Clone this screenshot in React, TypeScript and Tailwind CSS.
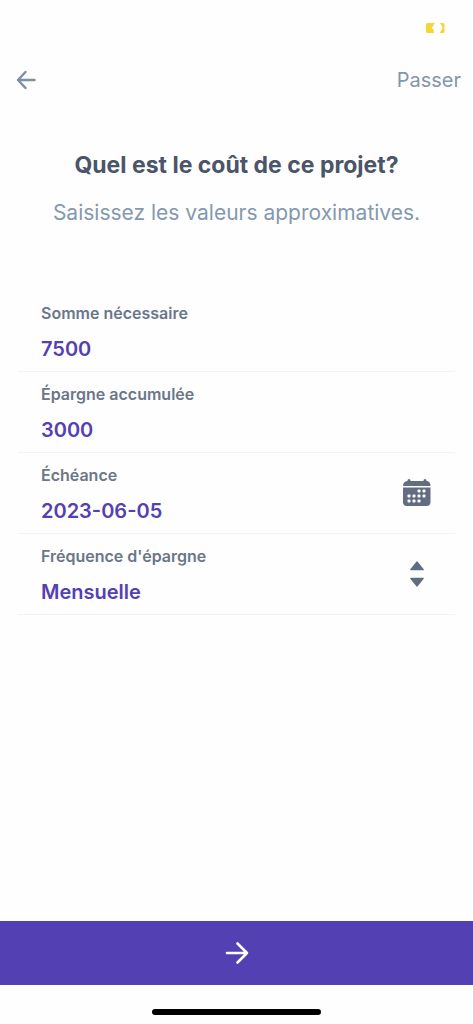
import { useState } from 'react';
import type { ReactNode } from 'react';

const valueClass =
  'block h-8 w-full appearance-none bg-transparent p-0 text-xl font-semibold text-[#5341b3] outline-none';

function Field({ id, label, icon, children }: { id: string; label: string; icon?: ReactNode; children: ReactNode }) {
  return (
    <div className="flex h-[81px] items-center border-b border-[#f3f3f5] pr-6 pl-[23px]">
      <div className="min-w-0 flex-1 pt-1">
        <label htmlFor={id} className="mb-2 block text-base font-semibold text-[#6b7689]">
          {label}
        </label>
        {children}
      </div>
      {icon}
    </div>
  );
}

function BatteryIcon() {
  return (
    <svg width="19" height="10" viewBox="0 0 19 10" fill="#f5d633" aria-hidden="true">
      <path d="M1.5 0H9L5.500 5l2 1.500L8 10H1.500Q0 10 0 8.500v-7Q0 0 1.500 0Z" />
      <path d="M14 0h3q1.500 0 1.500 1.500v7q0 1.500-1.500 1.500h-3.500L16.500 5.500Q16.500 3 14 0Z" />
    </svg>
  );
}

function CalendarIcon() {
  const dots = [
    [16, 12], [21, 12],
    [6, 17], [11, 17], [16, 17], [21, 17],
    [6, 22], [11, 22], [16, 22],
  ];
  return (
    <svg width="28" height="28" viewBox="0 0 28 28" fill="#626c82" aria-hidden="true">
      <path d="M4.500 2V1.500a1.500 1.500 0 0 1 3 0V2h13v-.5a1.500 1.500 0 0 1 3 0V2h.5q3.500.5 3.500 5H0Q0 2.500 4.500 2Z" />
      <path d="M0 8.500h27.500V23q0 4-4 4H4q-4 0-4-4Z" />
      {dots.map(([x, y]) => (
        <rect key={`${x}-${y}`} x={x - 1.5} y={y - 1.5} width="3" height="3" rx="1" fill="#fff" />
      ))}
    </svg>
  );
}

function SortIcon() {
  return (
    <svg width="28" height="26" viewBox="0 0 28 26" fill="#626c82" aria-hidden="true">
      <path d="M13.300.7q.7-.8 1.400 0l6 7.500q.5 1-.7 1H8q-1.200 0-.7-1Z" />
      <path d="M13.300 25.300q.7.8 1.400 0l6-7.500q.5-1-.7-1H8q-1.200 0-.7 1Z" />
    </svg>
  );
}

export default function App() {
  const [target, setTarget] = useState('7500');
  const [saved, setSaved] = useState('3000');
  const [deadline, setDeadline] = useState('2023-06-05');
  const [frequency, setFrequency] = useState('Mensuelle');

  return (
    <div className="flex min-h-screen flex-col bg-[#fefefe] font-['Inter',sans-serif]">
      <div className="flex h-14 items-center justify-end pr-7">
        <BatteryIcon />
      </div>

      <header className="flex h-12 items-center justify-between pr-3 pl-4">
        <button type="button" aria-label="Retour">
          <svg width="20" height="20" viewBox="0 0 20 20" fill="none" stroke="#7b8fa7" strokeWidth="2.400" strokeLinecap="round" strokeLinejoin="round">
            <path d="M18.500 10H2M9.500 2L2 10l7.500 8" />
          </svg>
        </button>
        <button type="button" className="text-xl text-[#8396ae]">
          Passer
        </button>
      </header>

      <main className="flex-1">
        <div className="pt-[45px] text-center">
          <h1 className="text-[23px] leading-8 font-bold text-[#4b5468]">Quel est le coût de ce projet?</h1>
          <p className="mt-4 text-[21px] leading-8 text-[#8498af]">Saisissez les valeurs approximatives.</p>
        </div>

        <form className="mx-[18px] mt-[62px]">
          <Field id="target" label="Somme nécessaire">
            <input id="target" inputMode="numeric" className={valueClass} value={target} onChange={(e) => setTarget(e.target.value)} />
          </Field>
          <Field id="saved" label="Épargne accumulée">
            <input id="saved" inputMode="numeric" className={valueClass} value={saved} onChange={(e) => setSaved(e.target.value)} />
          </Field>
          <Field id="deadline" label="Échéance" icon={<CalendarIcon />}>
            <input id="deadline" className={valueClass} value={deadline} onChange={(e) => setDeadline(e.target.value)} />
          </Field>
          <Field id="frequency" label="Fréquence d'épargne" icon={<SortIcon />}>
            <select id="frequency" className={valueClass} value={frequency} onChange={(e) => setFrequency(e.target.value)}>
              <option>Mensuelle</option>
            </select>
          </Field>
        </form>
      </main>

      <button type="button" aria-label="Continuer" className="flex h-16 w-full items-center justify-center bg-[#5341b3]">
        <svg width="24" height="24" viewBox="0 0 24 24" fill="none" stroke="#fff" strokeWidth="2.600" strokeLinecap="round" strokeLinejoin="round">
          <path d="M2 12h20M12.500 2.500L22 12l-9.500 9.500" />
        </svg>
      </button>
      <div className="flex h-[39px] items-center justify-center pt-[14px]">
        <div className="h-[6px] w-[169px] rounded-full bg-black" />
      </div>
    </div>
  );
}
